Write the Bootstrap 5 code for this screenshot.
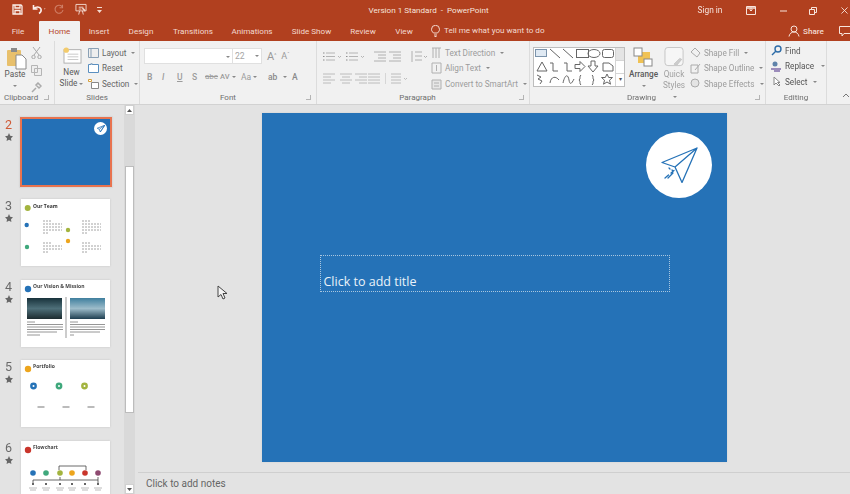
<!DOCTYPE html>
<html><head><meta charset="utf-8">
<link href="https://cdn.jsdelivr.net/npm/bootstrap@5.3.0/dist/css/bootstrap.min.css" rel="stylesheet">
<style>
html,body{height:494px;overflow:hidden;margin:0;background:#e3e3e3}
body{font-family:Roboto,"Open Sans",sans-serif;font-size:8.1px;color:#555;width:850px}
svg{display:block;flex:none}
.shell{height:494px;filter:blur(.55px)}
.titlebar{height:21px;background:#b1401f;color:#f6e3dc;position:relative}
.titlebar .doc-title{width:100%;text-align:center;padding-left:7px;font-size:8.100px}
.qat{position:absolute;left:12px;top:3px;gap:9px}
.winctl{position:absolute;right:0;top:0;height:21px;gap:0}
.signin{width:50px;text-align:center;font-size:8.300px}
.wbtn{width:32px;display:flex;justify-content:center;align-items:center;height:100%}
.tabbar{height:20px;background:#b1401f;color:#f3d9cf;font-size:8.100px;position:relative}
.tabitem{height:20px;line-height:21px;text-align:center;flex:none}
.tabitem.on{background:#f1f1f1;color:#b7472a;border-radius:1px 1px 0 0}
.tell{gap:4px;margin-left:8px}
.sharebox{position:absolute;right:-1px;top:0;height:20px;gap:3px}
.ribbon{height:64px;background:#f1f1f1;border-bottom:1px solid #d2d2d2;font-size:8.200px;color:#666}
.rgroup{height:63px;border-right:1px solid #dcdcdc;flex:none;position:relative;padding-top:3px}
.gname{position:absolute;left:0;right:0;bottom:1px;text-align:center;font-size:8px;color:#6e6e6e;line-height:11px}
.launch{position:absolute;right:5px;bottom:4px;width:5px;height:5px;border:1px solid #b4b4b4;border-width:0 1px 1px 0}
.faded{color:#9c9c9c}
.lrow{height:15.5px;gap:3px;white-space:nowrap}
.bigtxt{text-align:center;line-height:11px;color:#5a5a5a}
.fontbox{height:16px;background:#fff;border:1px solid #e0e0e0;color:#a5a5a5;padding:0 2px;line-height:14px;font-size:8.6px;position:relative}
.caret-s{display:inline-block;width:0;height:0;border:2px solid transparent;border-top:2.5px solid #888;border-bottom:0;vertical-align:middle;margin-left:2px}
.gallery{width:92px;height:40px;border:1px solid #bdbdbd;background:#fff;margin:3px 0 0 3px;flex:none}
.gscroll{width:9px;border-left:1px solid #d5d5d5;height:100%;flex:none}
.gscroll i{display:block;height:13px;border-bottom:1px solid #d5d5d5}
.workspace{height:389px;position:relative}
.thumbs{width:138px;height:389px;flex:none;overflow:hidden;position:relative}
.scrolltrack{position:absolute;left:124px;top:0;bottom:0;width:11px;background:#d9d9d9}
.scrollthumb{position:absolute;left:125px;top:61px;width:9px;height:247px;background:#fff;border:1px solid #bcbcbc}
.sarrow{position:absolute;left:125px;width:9px;height:10px;background:#fff;border:1px solid #d0d0d0;display:flex;align-items:center;justify-content:center}
.thumbrow{height:80.5px;flex:none}
.numcol{width:17px;margin-right:4px;text-align:center;font-size:12.500px;line-height:14px;color:#6a6a6a;padding-top:0}
.numcol.cur{color:#cf5a36}
.numcol svg{margin:1px auto 0}
.thumbcard{width:89px;height:67px;background:#fff;box-shadow:0 0 2px #c4c4c4;flex:none}
.thumbcard.cur{background:#2470b6;border:2px solid #e8734f;outline:1px solid #d9d9d9;box-sizing:content-box;width:88px;height:66px;margin:-1px 0 0 -1px;position:relative}
.mini-badge{position:absolute;right:3px;top:3px;width:13px;height:13px;background:#fff;border-radius:50%;display:flex;align-items:center;justify-content:center}
.rightcol{min-width:0}
.stagearea{height:367px;background:#e3e3e3}
.theslide{width:465px;height:349px;background:#2572b7;position:relative;margin-bottom:2px;box-shadow:0 0 2px #cfcfcf}
.logo-disc{position:absolute;left:384px;top:19px;width:66px;height:66px;background:#fff;border-radius:50%;display:flex;align-items:center;justify-content:center}
.titlebox{position:absolute;left:58px;top:142px;width:350px;height:37px;border:1px dotted #a9c6df;color:#eaf2fa;font-size:12.500px;padding:0 3px;display:flex;align-items:flex-end;line-height:19px;font-family:"Open Sans",sans-serif}
.pointer{position:absolute;left:217px;top:180px}
.notesbar{height:22px;background:#e3e3e3;border-top:1px solid #cfcfcf;color:#666;font-size:10px;padding-left:8px;line-height:22px}
</style></head>
<body>
<div class="shell d-flex flex-column">
  <div class="titlebar d-flex align-items-center">
    <div class="doc-title">Version 1 Standard&nbsp; -&nbsp; PowerPoint</div>
    <div class="qat d-flex align-items-center">
      <svg width="11" height="11" viewBox="0 0 11 11" fill="none" stroke="#fbeee9" stroke-width="1.3"><path d="M1 1h8l1 1v8H1z"/><path d="M3 1v3h5V1M3 10V6.500h5V10"/></svg>
      <svg width="14" height="11" viewBox="0 0 14 11" fill="none" stroke="#fbeee9" stroke-width="1.6"><path d="M1.500 1v4h4M2 4.500C4 2.500 8 2.500 9 5c.6 2-.5 3.500-2 4.500"/><path d="M12 4.500l1.500 0-.75 1z" fill="#fbeee9" stroke="none"/></svg>
      <svg width="10" height="11" viewBox="0 0 10 11" fill="none" stroke="#cf7e65" stroke-width="1.1" style="margin-left:-1px"><path d="M8 2.500A4 4 0 1 0 9 6M8.500 .8v3h-3"/></svg>
      <svg width="12" height="13" viewBox="0 0 13 13" fill="none" stroke="#f3d9cf" stroke-width="1" style="margin-left:2px"><path d="M1 1h11v7H1zM4 4h5M4 6h3M5 8l-1 4M8 8l1 4"/><path d="M8 5l3 3" stroke-width="1.600"/></svg>
      <svg width="6" height="8" viewBox="0 0 6 8" fill="#f3d9cf" style="margin-left:1px"><path d="M0 1h5v1H0zM0 4h5L2.500 7z"/></svg>
    </div>
    <div class="winctl d-flex align-items-center">
      <div class="signin">Sign in</div>
      <div class="wbtn"><svg width="10" height="9" viewBox="0 0 10 9" fill="none" stroke="#f8e4dc"><path d="M.5.500h9v8h-9z"/><path d="M5 1.500v3M3.500 3.500L5 5l1.500-1.500" /><path d="M.5 2h9" stroke-width="1.500"/></svg></div>
      <div class="wbtn" style="width:33px"><svg width="7" height="2"><path d="M0 1h7" stroke="#f8e4dc"/></svg></div>
      <div class="wbtn" style="width:26px"><svg width="8" height="8" viewBox="0 0 8 8" fill="none" stroke="#f8e4dc"><path d="M.5 2.500h5v5h-5zM2.500 2.500v-2h5v5h-2"/></svg></div>
      <div class="wbtn" style="width:24px;justify-content:flex-end;padding-right:2px"><svg width="7" height="7" viewBox="0 0 8 8" stroke="#f8e4dc"><path d="M.5.500l7 7M7.500.500l-7 7"/></svg></div>
    </div>
  </div>
  <div class="tabbar d-flex">
    <div class="tabitem" style="width:39px;padding-right:3px">File</div>
    <div class="tabitem on" style="width:41px">Home</div>
    <div class="tabitem" style="width:38px">Insert</div>
    <div class="tabitem" style="width:46px">Design</div>
    <div class="tabitem" style="width:58px">Transitions</div>
    <div class="tabitem" style="width:60px">Animations</div>
    <div class="tabitem" style="width:59px">Slide Show</div>
    <div class="tabitem" style="width:44px">Review</div>
    <div class="tabitem" style="width:38px">View</div>
    <div class="tell d-flex align-items-center" style="margin-top:-1px">
      <svg width="9" height="12" viewBox="0 0 9 12" fill="none" stroke="#f3d9cf"><path d="M2.500 8C1 6.500.5 5.500.5 4.300a4 4 0 0 1 8 0C8.500 5.500 8 6.500 6.500 8zM3 10h3M3.500 11.500h2"/></svg>
      <span>Tell me what you want to do</span>
    </div>
    <div class="sharebox d-flex align-items-center">
      <svg width="12" height="12" viewBox="0 0 12 12" fill="none" stroke="#f8e4dc"><circle cx="6" cy="4" r="3"/><path d="M1 11.500c.5-3 2.500-4.500 5-4.500s4.500 1.500 5 4.500"/></svg>
      <span style="margin-right:11px;font-weight:500;width:22px">Share</span>
      <svg width="12" height="11" viewBox="0 0 12 11" fill="none" stroke="#f8e4dc"><path d="M.5.500h11v7H5l-2 2.500V7.500H.5z"/></svg>
    </div>
  </div>
  <div class="ribbon d-flex">
    <div class="rgroup" style="width:55px">
      <div class="d-flex">
        <div class="bigtxt" style="width:30px">
          <svg width="21" height="23" viewBox="0 0 21 23" style="margin:3px 0 0 6px"><rect x="1" y="3" width="14" height="16" rx="1" fill="#e8c06c"/><rect x="5" y="1" width="6" height="4" fill="#8a8a8a"/><path d="M10 8h6l4 4v10H10z" fill="#fff" stroke="#8a8a8a"/></svg>
          <div style="margin-top:-1px">Paste</div>
          <span class="caret-s" style="margin:0"></span>
        </div>
        <div class="d-flex flex-column" style="gap:6px;margin:3px 0 0 1px">
          <svg width="11" height="12" viewBox="0 0 11 12" fill="none" stroke="#a8a8a8"><path d="M2 0l6 8M9 0L3 8"/><circle cx="2.500" cy="10" r="1.700"/><circle cx="8.500" cy="10" r="1.700"/></svg>
          <svg width="11" height="11" viewBox="0 0 11 11" fill="#eee" stroke="#b5b5b5"><path d="M.5.500h6v7h-6zM3.500 3.500h7v7h-7z"/></svg>
          <svg width="11" height="11" viewBox="0 0 11 11" fill="none" stroke="#aaa" stroke-width="1.500"><path d="M7 1l3 3-2 2-3-3zM5 6l-4 4"/></svg>
        </div>
      </div>
      <div class="gname" style="text-align:left;padding-left:4px">Clipboard</div>
      <div class="launch"></div>
    </div>
    <div class="rgroup" style="width:85px">
      <div class="d-flex">
        <div class="bigtxt" style="width:33px;padding-top:3px">
          <svg width="21" height="17" viewBox="0 0 21 19" style="margin:0 0 0 7px"><rect x="1" y="3" width="19" height="15" fill="#fff" stroke="#aaa"/><path d="M5 8h12M5 11h12M5 14h12" stroke="#c4c4c4"/><circle cx="3.500" cy="3.500" r="3" fill="#f3cb6c"/></svg>
          <div style="margin-top:3px">New<br>Slide<span class="caret-s"></span></div>
        </div>
        <div style="padding-top:1px">
          <div class="lrow d-flex align-items-center"><svg width="11" height="10" viewBox="0 0 11 10" fill="#eee" stroke="#8aa0b5"><path d="M.5.500h10v9H.500zM3 .500v9"/></svg>Layout<span class="caret-s"></span></div>
          <div class="lrow d-flex align-items-center"><svg width="11" height="10" viewBox="0 0 11 10" fill="#fff" stroke="#5a8fc0"><path d="M.5 1.500h10v8H.500z"/><path d="M2 1.500a2 2 0 0 1 3 0" stroke="#5f88b0"/></svg>Reset</div>
          <div class="lrow d-flex align-items-center"><svg width="11" height="10" viewBox="0 0 11 10" fill="#fff" stroke="#d69f3c"><path d="M.5.500h3v2h-3z"/><path d="M3.500 3.500h7v6h-7z" stroke="#888"/></svg>Section<span class="caret-s"></span></div>
        </div>
      </div>
      <div class="gname">Slides</div>
    </div>
    <div class="rgroup" style="width:177px;padding-left:4px">
      <div class="d-flex align-items-center" style="height:16px;margin-top:4px">
        <div class="fontbox" style="width:89px;text-align:right"><span class="caret-s"></span></div>
        <div class="fontbox" style="width:30px;margin-left:-1px;display:flex;justify-content:space-between;align-items:center">22<span class="caret-s"></span></div>
        <span style="font-size:11px;margin-left:5px;color:#999;line-height:1">A<sup style="font-size:5px">^</sup></span>
        <span style="font-size:9px;margin-left:5px;color:#999;line-height:1">A<sup style="font-size:5px">ˇ</sup></span>
      </div>
      <div class="d-flex align-items-center faded" style="height:16px;margin-top:5px;font-size:8.5px;font-weight:500;padding-left:3px">
        <span style="width:15px;font-weight:700">B</span><span style="width:15px;font-style:italic">I</span><span style="width:15px;text-decoration:underline">U</span><span style="width:13px">S</span><span style="width:15px;text-decoration:line-through;font-weight:400;font-size:8px">abc</span><span style="width:12px;font-size:7.500px">AV</span><span style="width:9px"><span class="caret-s" style="margin:0"></span></span><span style="width:12px;font-weight:400">Aa</span><span style="width:15px"><span class="caret-s" style="margin:0"></span></span><span style="width:15px;color:#8a8a8a">ab</span><span style="width:9px"><span class="caret-s" style="margin:0"></span></span><span style="color:#8a8a8a">A</span>
      </div>
      <div class="gname">Font</div>
      <div class="launch"></div>
    </div>
    <div class="rgroup" style="width:213px;padding-left:6px">
      <div class="d-flex">
        <div style="width:108px;flex:none;padding-top:5px">
          <div class="d-flex align-items-center" style="gap:7px;height:15px">
            <svg width="44" height="11" viewBox="0 0 44 11" stroke="#b4b4b4" fill="none"><path d="M3 2h9M3 5.500h9M3 9h9M26 2h9M26 5.500h9M26 9h9" /><path d="M0 2h1.500M0 5.500h1.500M0 9h1.500M23 2h1.500M23 5.500h1.500M23 9h1.500" stroke="#8d8d8d"/><path d="M15 5l1.500 1.500L18 5M38 5l1.500 1.500L41 5" /></svg>
            <svg width="27" height="11" viewBox="0 0 27 11" stroke="#b0b0b0" fill="none"><path d="M0 1h12M4 4h8M4 7h8M0 10h12M15 1h12M19 4h8M19 7h8M15 10h12"/></svg>
            <svg width="18" height="13" viewBox="0 0 18 13" stroke="#b0b0b0" fill="none" style="margin-left:2px"><path d="M2 1v11M5 2h7M5 6h7M5 10h7"/><path d="M14 6l1.500 1.500L17 6"/></svg>
          </div>
          <div class="d-flex align-items-center" style="gap:5px;height:15px;margin-top:7px">
            <svg width="57" height="11" viewBox="0 0 57 11" stroke="#bcbcbc" fill="none"><path d="M0 1h12M0 4h8M0 7h12M0 10h8M17 1h12M19 4h8M17 7h12M19 10h8M32 1h12M36 4h8M32 7h12M36 10h8M45 1h12M45 4h12M45 7h12M45 10h12"/></svg>
            <svg width="24" height="11" viewBox="0 0 24 11" stroke="#bcbcbc" fill="none"><path d="M0 0v11M6 1h10M6 4h10M6 7h10M6 10h10M19 5l1.500 1.500L22 5"/></svg>
          </div>
        </div>
        <div class="faded" style="padding-top:1px">
          <div class="lrow d-flex align-items-center"><svg width="11" height="12" viewBox="0 0 11 12" stroke="#b0b0b0" fill="none"><path d="M2 1v10M5 1v10M8 1v10M1 1h9"/></svg>Text Direction<span class="caret-s"></span></div>
          <div class="lrow d-flex align-items-center"><svg width="11" height="12" viewBox="0 0 11 12" stroke="#b0b0b0" fill="none"><path d="M1 1h9v10H1zM5.500 3v6"/></svg>Align Text<span class="caret-s"></span></div>
          <div class="lrow d-flex align-items-center"><svg width="11" height="12" viewBox="0 0 11 12" stroke="#b0b0b0" fill="#e7e7e7"><path d="M1 2h9v9H1zM3 5h5M3 8h5"/></svg>Convert to SmartArt<span class="caret-s"></span></div>
        </div>
      </div>
      <div class="gname" style="padding-right:11px">Paragraph</div>
      <div class="launch"></div>
    </div>
    <div class="rgroup" style="width:236px">
      <div class="d-flex">
        <div class="gallery d-flex">
          <svg width="81" height="38" viewBox="0 0 81 38" fill="none" stroke="#666">
            <rect x="1.500" y="1.500" width="11" height="7" fill="#dfe9f3" stroke="#7b93ab"/><path d="M16 1l10 9M29 1l10 9"/><rect x="42.500" y="1.500" width="12" height="8"/><ellipse cx="60" cy="5.500" rx="6" ry="4"/><rect x="68.500" y="1.500" width="11" height="8" rx="2"/>
            <path d="M8 14l5 9H3zM16 15h3v8h5M30 15h3v8h5M41 16.500h5v-3l5 5-5 5v-3h-5zM57 13v5h-3l5 6 5-6h-3v-5zM69 15h6l4 3v5H69z"/>
            <path d="M3 27l4 2-3 2 4 2-2 3M16 35c1-7 6-7 9-3M29 35c2-9 5-9 6-3s3 3 5-1M47 27c-2 1 0 4-2 5 2 1 0 4 2 5M58 27c2 1 0 4 2 5-2 1 0 4-2 5M73 26l1.700 3.500h3.800l-3 2.700 1 4-3.500-2.200-3.500 2.200 1-4-3-2.700h3.800z"/>
          </svg>
          <div class="gscroll">
            <i style="background:#e4e4e4"></i><i></i>
            <div class="text-center" style="line-height:9px;font-size:6px;color:#555">▾</div>
          </div>
        </div>
        <div class="bigtxt" style="width:33px;flex:none;padding-top:1px;margin-left:2px">
          <svg width="20" height="20" viewBox="0 0 20 20" style="margin:2px 0 0 6px"><rect x="5" y="5" width="12" height="11" fill="#f0c254"/><rect x="1" y="1" width="8" height="8" fill="#fff" stroke="#888"/><rect x="11" y="12" width="8" height="7" fill="#fff" stroke="#888"/></svg>
          <div style="margin-top:2px;font-weight:500">Arrange</div><span class="caret-s" style="margin:0"></span>
        </div>
        <div class="bigtxt faded" style="width:26px;flex:none;padding-top:1px;margin-left:1px">
          <svg width="21" height="20" viewBox="0 0 21 21" style="margin:2px 0 0 3px" fill="#f6f6f6" stroke="#c4c4c4"><rect x=".5" y=".5" width="19" height="19" rx="3"/><path d="M10 18l6-6 2 1-5 6z" fill="#ccc"/></svg>
          <div style="margin-top:2px;color:#a0a0a0">Quick<br>Styles<span class="caret-s"></span></div>
        </div>
        <div class="faded" style="margin-left:3px;padding-top:1px">
          <div class="lrow d-flex align-items-center"><svg width="11" height="11" viewBox="0 0 11 11" stroke="#aaa" fill="none"><path d="M1 5l4-4 5 5-3 4z"/></svg>Shape Fill<span class="caret-s"></span></div>
          <div class="lrow d-flex align-items-center"><svg width="11" height="11" viewBox="0 0 11 11" stroke="#aaa" fill="none"><path d="M1 2h7v8H1zM5 7l5-6"/></svg>Shape Outline<span class="caret-s"></span></div>
          <div class="lrow d-flex align-items-center"><svg width="11" height="11" viewBox="0 0 11 11" stroke="#aaa" fill="#e4e4e4"><circle cx="5" cy="5" r="4"/></svg>Shape Effects<span class="caret-s"></span></div>
        </div>
      </div>
      <div class="gname" style="padding-right:12px">Drawing</div>
      <div class="launch"></div>
    </div>
    <div class="rgroup" style="width:61px;padding-left:5px;padding-top:2px">
      <div class="lrow d-flex align-items-center" style="color:#555"><svg width="11" height="11" viewBox="0 0 11 11" stroke="#2d6ca8" fill="none" stroke-width="1.400"><circle cx="7" cy="4" r="3"/><path d="M5 6l-4 4"/></svg>Find</div>
      <div class="lrow d-flex align-items-center" style="color:#555"><svg width="11" height="11" viewBox="0 0 11 11" fill="#5f83aa"><circle cx="4" cy="3" r="2.500"/><path d="M0 7h10v2H0zM3 9h6v2H3z" fill="#9c8cbb"/></svg>Replace<span class="caret-s" style="margin-left:4px"></span></div>
      <div class="lrow d-flex align-items-center" style="color:#555"><svg width="11" height="11" viewBox="0 0 11 11" fill="#fff" stroke="#888"><path d="M3 1v8l2-2 3 3 1-1-2.500-2.500H9z"/></svg>Select<span class="caret-s"></span></div>
      <div class="gname">Editing</div>
    </div>
    <div class="flex-grow-1 position-relative"><svg width="8" height="5" viewBox="0 0 8 5" fill="none" stroke="#777" style="position:absolute;right:0;bottom:6px"><path d="M1 4l3-3 3 3"/></svg></div>
  </div>
  <div class="workspace d-flex">
    <div class="thumbs">
      <div class="scrolltrack"></div>
      <div class="scrollthumb"></div>
      <div class="sarrow" style="top:0"><svg width="5" height="3"><path d="M0 3l2.500-3L5 3z" fill="#555"/></svg></div>
      <div class="sarrow" style="bottom:0"><svg width="5" height="3"><path d="M0 0l2.500 3L5 0z" fill="#555"/></svg></div>
      <div style="padding-top:13px">
      <div class="thumbrow d-flex" style="height:81px">
        <div class="numcol cur">2<svg width="8" height="8" viewBox="0 0 10 10"><path d="M5 0l1.500 3.500L10 4 7.500 6.500 8 10 5 8.500 2 10l.5-3.500L0 4l3.500-.5z" fill="#666"/></svg></div>
        <div class="thumbcard cur"><div class="mini-badge"><svg width="8" height="8" viewBox="0 0 32 32" fill="none" stroke="#2572b7" stroke-width="3"><path d="M31 1L1 13l8 4 4 11zM9 17L31 1M13 28L31 1"/></svg></div></div>
      </div>
      <div class="thumbrow d-flex">
        <div class="numcol">3<svg width="8" height="8" viewBox="0 0 10 10"><path d="M5 0l1.500 3.500L10 4 7.500 6.500 8 10 5 8.500 2 10l.5-3.500L0 4l3.500-.5z" fill="#666"/></svg></div>
        <div class="thumbcard"><svg width="89" height="67" viewBox="0 0 89 67"><circle cx="6.700" cy="9" r="3" fill="#a3b43f"/><text x="12" y="9" font-size="5" font-weight="700" fill="#333" font-family="Open Sans">Our Team</text><circle cx="5.700" cy="26" r="2.200" fill="#2572b7"/><circle cx="6" cy="48" r="2.200" fill="#3fa87c"/><circle cx="47" cy="31" r="2.200" fill="#a3b43f"/><circle cx="47" cy="42" r="2.200" fill="#eda51d"/><path d="M22 22h8M22 25h19M22 28h19M22 31h19M22 34h6M61 22h8M61 25h19M61 28h19M61 31h19M61 34h6M22 44h8M22 47h19M22 50h19M22 53h6M61 44h8M61 47h19M61 50h19M61 53h6" fill="none" stroke="#9a9a9a" stroke-width=".9" stroke-dasharray="2 1"/></svg></div>
      </div>
      <div class="thumbrow d-flex">
        <div class="numcol">4<svg width="8" height="8" viewBox="0 0 10 10"><path d="M5 0l1.500 3.500L10 4 7.500 6.500 8 10 5 8.500 2 10l.5-3.500L0 4l3.500-.5z" fill="#666"/></svg></div>
        <div class="thumbcard"><svg width="89" height="67" viewBox="0 0 89 67"><defs><linearGradient id="ph1" x1="0" y1="0" x2="0" y2="1"><stop offset="0" stop-color="#18323b"/><stop offset=".5" stop-color="#4e6f79"/><stop offset="1" stop-color="#1c2b2f"/></linearGradient><linearGradient id="ph2" x1="0" y1="0" x2="0" y2="1"><stop offset="0" stop-color="#3f7f9e"/><stop offset=".5" stop-color="#9dbcca"/><stop offset="1" stop-color="#1e3e50"/></linearGradient></defs><circle cx="7" cy="9" r="3.200" fill="#2572b7"/><text x="12" y="8" font-size="5" font-weight="700" fill="#444" font-family="Open Sans">Our Vision &amp; Mission</text><rect x="6" y="18" width="35" height="21" fill="url(#ph1)"/><rect x="49" y="18" width="35" height="21" fill="url(#ph2)"/><path d="M45 17v41" stroke="#999"/><path d="M6 42h8M6 44.500h36M6 47h36M6 49.500h36M6 52h30M6 55h13M49 42h8M49 44.500h35M49 47h35M49 49.500h35M49 52h30M49 55h4" stroke="#8a8a8a" stroke-width=".9"/></svg></div>
      </div>
      <div class="thumbrow d-flex">
        <div class="numcol">5<svg width="8" height="8" viewBox="0 0 10 10"><path d="M5 0l1.500 3.500L10 4 7.500 6.500 8 10 5 8.500 2 10l.5-3.500L0 4l3.500-.5z" fill="#666"/></svg></div>
        <div class="thumbcard"><svg width="89" height="67" viewBox="0 0 89 67"><circle cx="7" cy="9" r="3.200" fill="#eda51d"/><text x="12" y="8" font-size="5" font-weight="700" fill="#444" font-family="Open Sans">Portfolio</text><circle cx="12.500" cy="26" r="3.400" fill="#2572b7"/><circle cx="38" cy="26" r="3.400" fill="#3fa87c"/><circle cx="63.500" cy="26" r="3.400" fill="#a3b43f"/><circle cx="12.500" cy="26" r="1" fill="#fff"/><circle cx="38" cy="26" r="1" fill="#fff"/><circle cx="63.500" cy="26" r="1" fill="#fff"/><path d="M16.500 47h7M41.500 47h7M66.500 47h7" stroke="#bbb" stroke-width="2"/></svg></div>
      </div>
      <div class="thumbrow d-flex">
        <div class="numcol">6<svg width="8" height="8" viewBox="0 0 10 10"><path d="M5 0l1.500 3.500L10 4 7.500 6.500 8 10 5 8.500 2 10l.5-3.500L0 4l3.500-.5z" fill="#666"/></svg></div>
        <div class="thumbcard"><svg width="89" height="67" viewBox="0 0 89 67"><circle cx="7" cy="9" r="3.200" fill="#c9352b"/><text x="12" y="8" font-size="5" font-weight="700" fill="#444" font-family="Open Sans">Flowchart</text><path d="M38 29v-4h27v4M12 39h65M12 39v3M39 36v3M77 36v6" fill="none" stroke="#444" stroke-width=".8"/><circle cx="12" cy="32" r="2.800" fill="#2572b7"/><circle cx="25" cy="32" r="2.800" fill="#3fa87c"/><circle cx="39" cy="32" r="2.800" fill="#a3b43f"/><circle cx="51" cy="32" r="2.800" fill="#eda51d"/><circle cx="64" cy="32" r="2.800" fill="#c9352b"/><circle cx="77" cy="32" r="2.800" fill="#8e4a71"/><path d="M11 43h2M24 43h2M38 43h2M50 43h2M63 43h2M76 43h2" stroke="#333" stroke-width="1.500"/><path d="M8 47h8M21 47h8M35 47h8M47 47h8M60 47h8M73 47h8M9 49h6M22 49h6M36 49h6M48 49h6M61 49h6M74 49h6" stroke="#aaa" stroke-width=".8"/></svg></div>
      </div>
      </div>
    </div>
    <div class="rightcol flex-grow-1 d-flex flex-column">
      <div class="stagearea d-flex align-items-center justify-content-center">
        <div class="theslide">
          <div class="logo-disc">
            <svg width="38" height="36" viewBox="0 0 38 36" fill="none" stroke="#2572b7" stroke-width="1.300" stroke-linejoin="round" stroke-linecap="round"><path d="M37 1L2 15.500l13 4.500 7 15.500zM15 20L37 1"/><path d="M5 31l3.500-3M11 26l3-2.500M8 31l5-5M9 21l1 1M12 23l1 1"/></svg>
          </div>
          <div class="titlebox">Click to add title</div>
        </div>
      </div>
      <div class="notesbar">Click to add notes</div>
    </div>
    <svg class="pointer" width="11" height="15" viewBox="0 0 11 15"><path d="M1 1v11l3-2.500 2 4.500 2-1-2-4.500h4z" fill="#f4f4f4" stroke="#444"/></svg>
  </div>
</div>
</body></html>
